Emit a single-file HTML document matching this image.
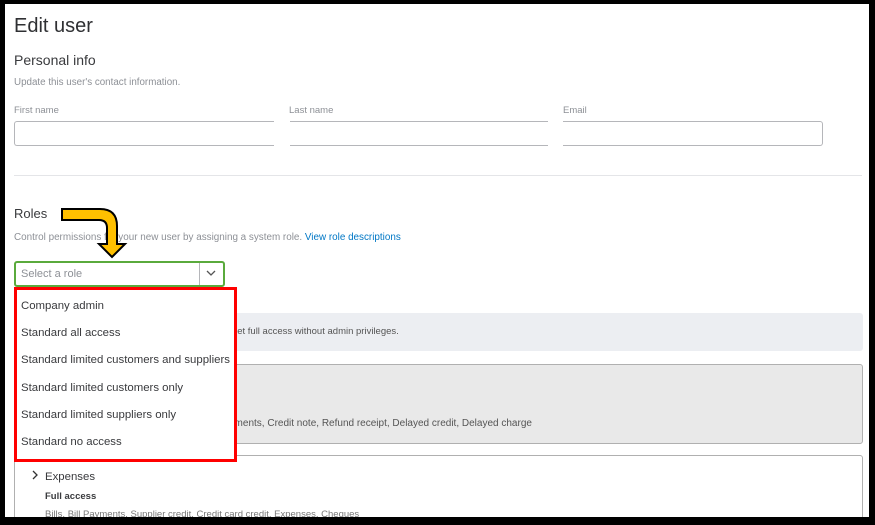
<!DOCTYPE html>
<html><head><meta charset="utf-8"><style>
*{margin:0;padding:0;box-sizing:border-box}
body{width:875px;height:525px;background:#000;position:relative;overflow:hidden;font-family:"Liberation Sans",sans-serif;color:#393a3d}
#pg{position:absolute;left:5px;top:4px;width:864px;height:513px;background:#fff;overflow:hidden}
.a{position:absolute;white-space:nowrap}
.lab{font-size:9.5px;color:#8d9096}
.inp{position:absolute;height:25px;border-top:1px solid #b5b6ba;border-bottom:1px solid #b5b6ba}
.opt{position:absolute;left:16px;font-size:11.4px;color:#393a3d}
</style></head><body><div id="pg">
<div class="a" style="left:9px;top:11px;font-size:20px;color:#2f3033">Edit user</div>
<div class="a" style="left:9px;top:48px;font-size:14px;color:#393a3d">Personal info</div>
<div class="a lab" style="left:9px;top:73px;font-size:9.8px">Update this user's contact information.</div>
<div class="a lab" style="left:9px;top:101px">First name</div>
<div class="a lab" style="left:284px;top:101px">Last name</div>
<div class="a lab" style="left:558px;top:101px">Email</div>
<div class="inp" style="left:9px;top:117px;width:260px;border-left:1px solid #b5b6ba;border-radius:3px 0 0 3px"></div>
<div class="inp" style="left:285px;top:117px;width:258px"></div>
<div class="inp" style="left:558px;top:117px;width:260px;border-right:1px solid #b5b6ba;border-radius:0 3px 3px 0"></div>
<div class="a" style="left:9px;top:171px;width:848px;height:1px;background:#e4e5e8"></div>
<div class="a" style="left:9px;top:202px;font-size:13px">Roles</div>
<div class="a lab" style="left:9px;top:228px;font-size:9.9px">Control permissions for your new user by assigning a system role. <span style="color:#0077c5">View role descriptions</span></div>
<div class="a" style="left:9px;top:257px;width:211px;height:26px;border:2px solid #5aaa3c;border-radius:3px"></div>
<div class="a" style="left:16px;top:264px;font-size:11px;color:#8d9096">Select a role</div>
<div class="a" style="left:194px;top:259px;width:1px;height:22px;background:#b5b6ba"></div>
<svg class="a" style="left:200px;top:264px" width="12" height="10"><path d="M2 3l4 4 4-4" stroke="#555" stroke-width="1.3" fill="none"/></svg>
<div class="a" style="left:210px;top:309px;width:648px;height:38px;background:#eceef2;border-radius:3px"></div>
<div class="a" style="left:219px;top:322px;font-size:9.5px;color:#555">e get full access without admin privileges.</div>
<div class="a" style="left:9px;top:360px;width:849px;height:80px;background:#e9e9e9;border:1px solid #b0b0b0;border-radius:3px"></div>
<div class="a" style="left:219px;top:414px;font-size:10px;color:#555">ayments, Credit note, Refund receipt, Delayed credit, Delayed charge</div>
<div class="a" style="left:9px;top:451px;width:849px;height:80px;background:#fff;border:1px solid #b0b0b0;border-radius:3px"></div>
<svg class="a" style="left:26px;top:466px" width="8" height="10"><path d="M2 1l4 4-4 4" stroke="#333" stroke-width="1.3" fill="none"/></svg>
<div class="a" style="left:40px;top:467px;font-size:11.4px">Expenses</div>
<div class="a" style="left:40px;top:487px;font-size:9.5px;font-weight:bold">Full access</div>
<div class="a" style="left:40px;top:505px;font-size:9.5px;color:#777">Bills, Bill Payments, Supplier credit, Credit card credit, Expenses, Cheques</div>
<div class="a" style="left:9px;top:283px;width:223px;height:175px;background:#fff;border:3px solid #f00"></div>
<div class="opt" style="top:296px">Company admin</div>
<div class="opt" style="top:323px">Standard all access</div>
<div class="opt" style="top:350px">Standard limited customers and suppliers</div>
<div class="opt" style="top:378px">Standard limited customers only</div>
<div class="opt" style="top:405px">Standard limited suppliers only</div>
<div class="opt" style="top:432px">Standard no access</div>
<svg class="a" style="left:0;top:0" width="864" height="513"><path d="M57 205 H95 Q112 205 112 222 V240 H120 L107 253 L94 240 H102 V224 Q102 216 94 216 H57 Z" fill="#ffc000" stroke="#000" stroke-width="2"/></svg>
</div></body></html>
